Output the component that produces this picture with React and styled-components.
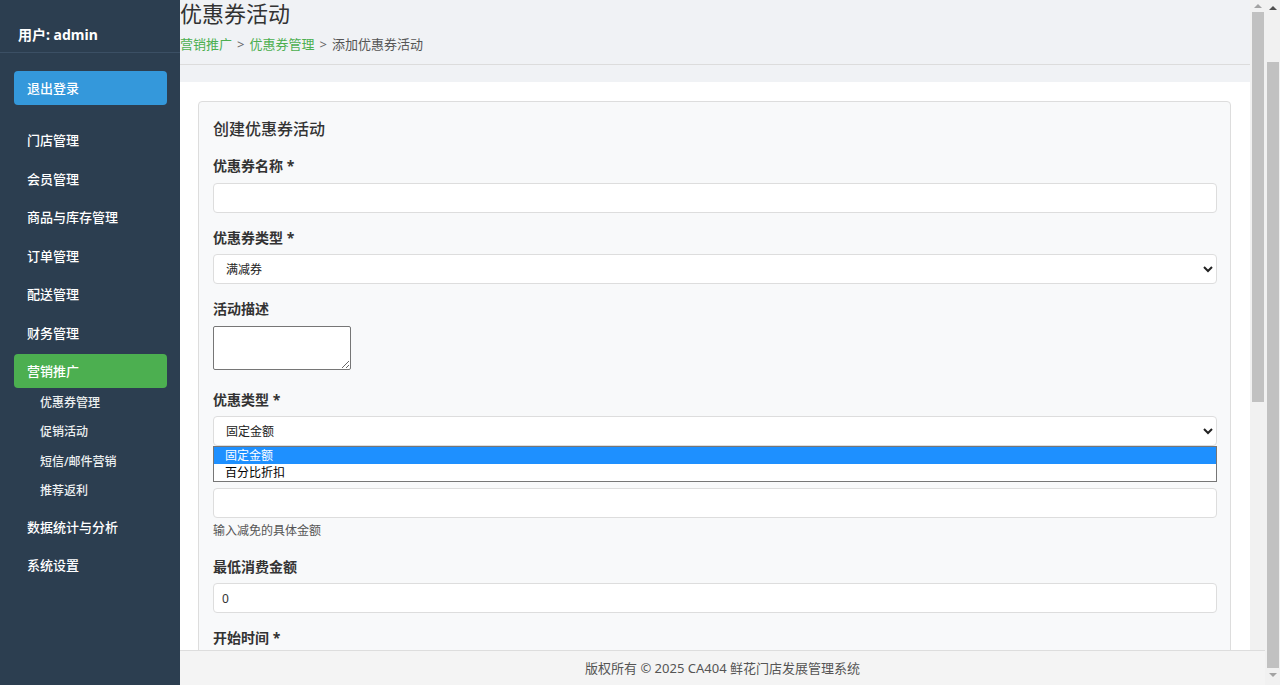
import React from 'react';
import styled, { createGlobalStyle } from 'styled-components';

const GlobalStyle = createGlobalStyle`
  html, body { height: 100%; overflow: hidden; }
  body {
    margin: 0;
    font-family: "Noto Sans", "Noto Sans CJK SC", sans-serif;
    color: #333;
  }
  #root { height: 100%; }
  *, *::before, *::after { box-sizing: border-box; }
`;

const Shell = styled.div`
  height: 100vh;
  display: flex;
`;

const Sidebar = styled.aside`
  width: 180px;
  flex: none;
  background: #2c3e50;
  color: #fff;
  display: flex;
  flex-direction: column;
`;

const UserBox = styled.div`
  padding: 26px 18px 8px;
  font-size: 14px;
  font-weight: 700;
  line-height: 18px;
  border-bottom: 1px solid #3b4f64;
`;

const SideBody = styled.div`
  padding: 18px 13px 0 14px;
`;

const LogoutButton = styled.button`
  display: block;
  width: 100%;
  height: 34px;
  border: none;
  border-radius: 4px;
  background: #3498db;
  color: #fff;
  text-align: left;
  padding: 0 13px;
  font-family: inherit;
  font-size: 13px;
  font-weight: 500;
  line-height: 34px;
`;

const Nav = styled.nav`
  margin-top: 18px;
  display: flex;
  flex-direction: column;
  gap: 4.5px;
`;

const NavItem = styled.div`
  height: 34px;
  padding: 0 13px;
  line-height: 34px;
  font-size: 13px;
  font-weight: 500;
  border-radius: 4px;
  color: #fff;
  background: ${p => (p.$active ? '#4caf50' : 'transparent')};
`;

const SubList = styled.div`
  display: flex;
  flex-direction: column;
`;

const SubItem = styled.div`
  padding: 5px 0 5px 26px;
  font-size: 12px;
  font-weight: 500;
  line-height: 19.3px;
  color: #ecf0f1;
`;

const MainColumn = styled.div`
  flex: 1;
  min-width: 0;
  display: flex;
  flex-direction: column;
`;

const MainBody = styled.div`
  flex: 1;
  min-height: 0;
  display: flex;
`;

const ScrollArea = styled.main`
  flex: 1;
  min-width: 0;
  overflow: hidden;
  background: #f0f2f5;
`;

const ScrollTrack = styled.div`
  width: 15px;
  flex: none;
  background: #f1f1f1;
  display: flex;
  flex-direction: column;
  align-items: center;
`;

const Arrow = styled.div`
  width: 0;
  height: 0;
  flex: none;
  margin-top: ${p => p.$mt}px;
  border-left: 4px solid transparent;
  border-right: 4px solid transparent;
  ${p => (p.$down ? 'border-top' : 'border-bottom')}: 4px solid ${p => p.$color};
`;

const Thumb = styled.div`
  width: 12px;
  flex: none;
  background: #c1c1c1;
  margin-top: ${p => p.$mt}px;
  height: ${p => p.$h}px;
`;

const Header = styled.header`
  padding-bottom: 11px;
  border-bottom: 1px solid #dcdcdc;
`;

const Title = styled.h1`
  margin: 0;
  font-size: 22px;
  font-weight: 400;
  line-height: 26px;
  color: #333;
`;

const Breadcrumb = styled.div`
  margin-top: 9px;
  font-size: 13px;
  line-height: 18px;
  color: #555;
`;

const Crumb = styled.span`
  color: #4caf50;
`;

const Sep = styled.span`
  color: #666;
  padding: 0 5px;
`;

const Content = styled.section`
  margin-top: 17px;
  background: #fff;
  padding: 19px 19px 18px 18px;
`;

const Card = styled.div`
  background: #f8f9fa;
  border: 1px solid #dddddd;
  border-radius: 4px;
  padding: 14px 13px 14px 14px;
`;

const CardTitle = styled.h2`
  margin: 0 0 14px;
  font-size: 16px;
  font-weight: 500;
  line-height: 26px;
  color: #333;
`;

const Group = styled.div`
  margin-bottom: 15px;
  padding-bottom: ${p => p.$pb || 0}px;
`;

const Label = styled.label`
  display: block;
  font-size: 14px;
  font-weight: 700;
  line-height: 19px;
  margin-bottom: 7.5px;
  color: #333;
`;

const Input = styled.input`
  display: block;
  width: 100%;
  height: 30px;
  border: 1px solid #dddddd;
  border-radius: 4px;
  padding: 0 8px;
  background: #fff;
  font-family: inherit;
  font-size: 12px;
  color: #333;
`;

const Select = styled.select`
  display: block;
  width: 100%;
  height: 30px;
  border: 1px solid #dddddd;
  border-radius: 4px;
  padding: 0 8px;
  background: #fff;
  font-family: inherit;
  font-size: 12px;
  color: #222;
`;

const TextArea = styled.textarea`
  display: block;
  width: 138px;
  height: 44px;
  margin: 0;
  border: 1px solid #767676;
  border-radius: 2px;
  background: #fff;
  font-family: inherit;
  resize: both;
`;

const SelectWrap = styled.div`
  position: relative;
`;

const Dropdown = styled.ul`
  position: absolute;
  top: 100%;
  left: 0;
  right: 0;
  margin: 0;
  padding: 0;
  list-style: none;
  background: #fff;
  border: 1px solid #767676;
  z-index: 5;
`;

const Option = styled.li`
  height: 17px;
  line-height: 17px;
  padding-left: 11px;
  font-size: 12px;
  color: ${p => (p.$selected ? '#fff' : '#000')};
  background: ${p => (p.$selected ? '#1e90ff' : '#fff')};
`;

const Help = styled.small`
  display: block;
  margin-top: 5px;
  font-size: 12px;
  line-height: 16px;
  color: #555;
`;

const Actions = styled.div`
  display: flex;
  gap: 10px;
  padding-top: 2px;
`;

const Button = styled.button`
  height: 34px;
  padding: 0 18px;
  border: none;
  border-radius: 4px;
  font-family: inherit;
  font-size: 13px;
  color: #fff;
  background: ${p => (p.$secondary ? '#95a5a6' : '#4caf50')};
`;

const Footer = styled.footer`
  height: 35px;
  flex: none;
  background: #f4f4f4;
  border-top: 1px solid #dddddd;
  text-align: center;
  font-size: 13px;
  line-height: 34px;
  color: #555;
`;

const navTop = ['门店管理', '会员管理', '商品与库存管理', '订单管理', '配送管理', '财务管理'];
const subNav = ['优惠券管理', '促销活动', '短信/邮件营销', '推荐返利'];
const navBottom = ['数据统计与分析', '系统设置'];

export default function App() {
  return (
    <Shell>
      <GlobalStyle />
      <Sidebar>
        <UserBox>用户: admin</UserBox>
        <SideBody>
          <LogoutButton>退出登录</LogoutButton>
          <Nav>
            {navTop.map(n => (
              <NavItem key={n}>{n}</NavItem>
            ))}
            <div>
              <NavItem $active>营销推广</NavItem>
              <SubList>
                {subNav.map(s => (
                  <SubItem key={s}>{s}</SubItem>
                ))}
              </SubList>
            </div>
            {navBottom.map(n => (
              <NavItem key={n}>{n}</NavItem>
            ))}
          </Nav>
        </SideBody>
      </Sidebar>
      <MainColumn>
        <MainBody>
          <ScrollArea>
            <Header>
              <Title>优惠券活动</Title>
              <Breadcrumb>
                <Crumb>营销推广</Crumb>
                <Sep>&gt;</Sep>
                <Crumb>优惠券管理</Crumb>
                <Sep>&gt;</Sep>
                添加优惠券活动
              </Breadcrumb>
            </Header>
            <Content>
              <Card>
                <CardTitle>创建优惠券活动</CardTitle>
                <Group>
                  <Label>优惠券名称 *</Label>
                  <Input type="text" />
                </Group>
                <Group>
                  <Label>优惠券类型 *</Label>
                  <Select defaultValue="满减券">
                    <option>满减券</option>
                    <option>折扣券</option>
                    <option>代金券</option>
                  </Select>
                </Group>
                <Group $pb={5}>
                  <Label>活动描述</Label>
                  <TextArea />
                </Group>
                <Group>
                  <Label>优惠类型 *</Label>
                  <SelectWrap>
                    <Select defaultValue="固定金额">
                      <option>固定金额</option>
                      <option>百分比折扣</option>
                    </Select>
                    <Dropdown>
                      <Option $selected>固定金额</Option>
                      <Option>百分比折扣</Option>
                    </Dropdown>
                  </SelectWrap>
                </Group>
                <Group $pb={3}>
                  <Label>优惠金额 *</Label>
                  <Input type="text" />
                  <Help>输入减免的具体金额</Help>
                </Group>
                <Group>
                  <Label>最低消费金额</Label>
                  <Input type="text" defaultValue="0" />
                </Group>
                <Group>
                  <Label>开始时间 *</Label>
                  <Input type="text" />
                </Group>
                <Group>
                  <Label>结束时间 *</Label>
                  <Input type="text" />
                </Group>
                <Group>
                  <Label>发放总量 *</Label>
                  <Input type="text" />
                </Group>
                <Actions>
                  <Button>创建活动</Button>
                  <Button $secondary>取消</Button>
                </Actions>
              </Card>
            </Content>
          </ScrollArea>
          <ScrollTrack>
            <Arrow $mt={4} $color="#a3a3a3" />
            <Thumb $mt={4} $h={390} />
          </ScrollTrack>
        </MainBody>
        <Footer>版权所有 © 2025 CA404 鲜花门店发展管理系统</Footer>
      </MainColumn>
      <ScrollTrack>
        <Arrow $mt={6} $color="#505050" />
        <Thumb $mt={52} $h={606} />
        <Arrow $mt={5} $down $color="#a3a3a3" />
      </ScrollTrack>
    </Shell>
  );
}
